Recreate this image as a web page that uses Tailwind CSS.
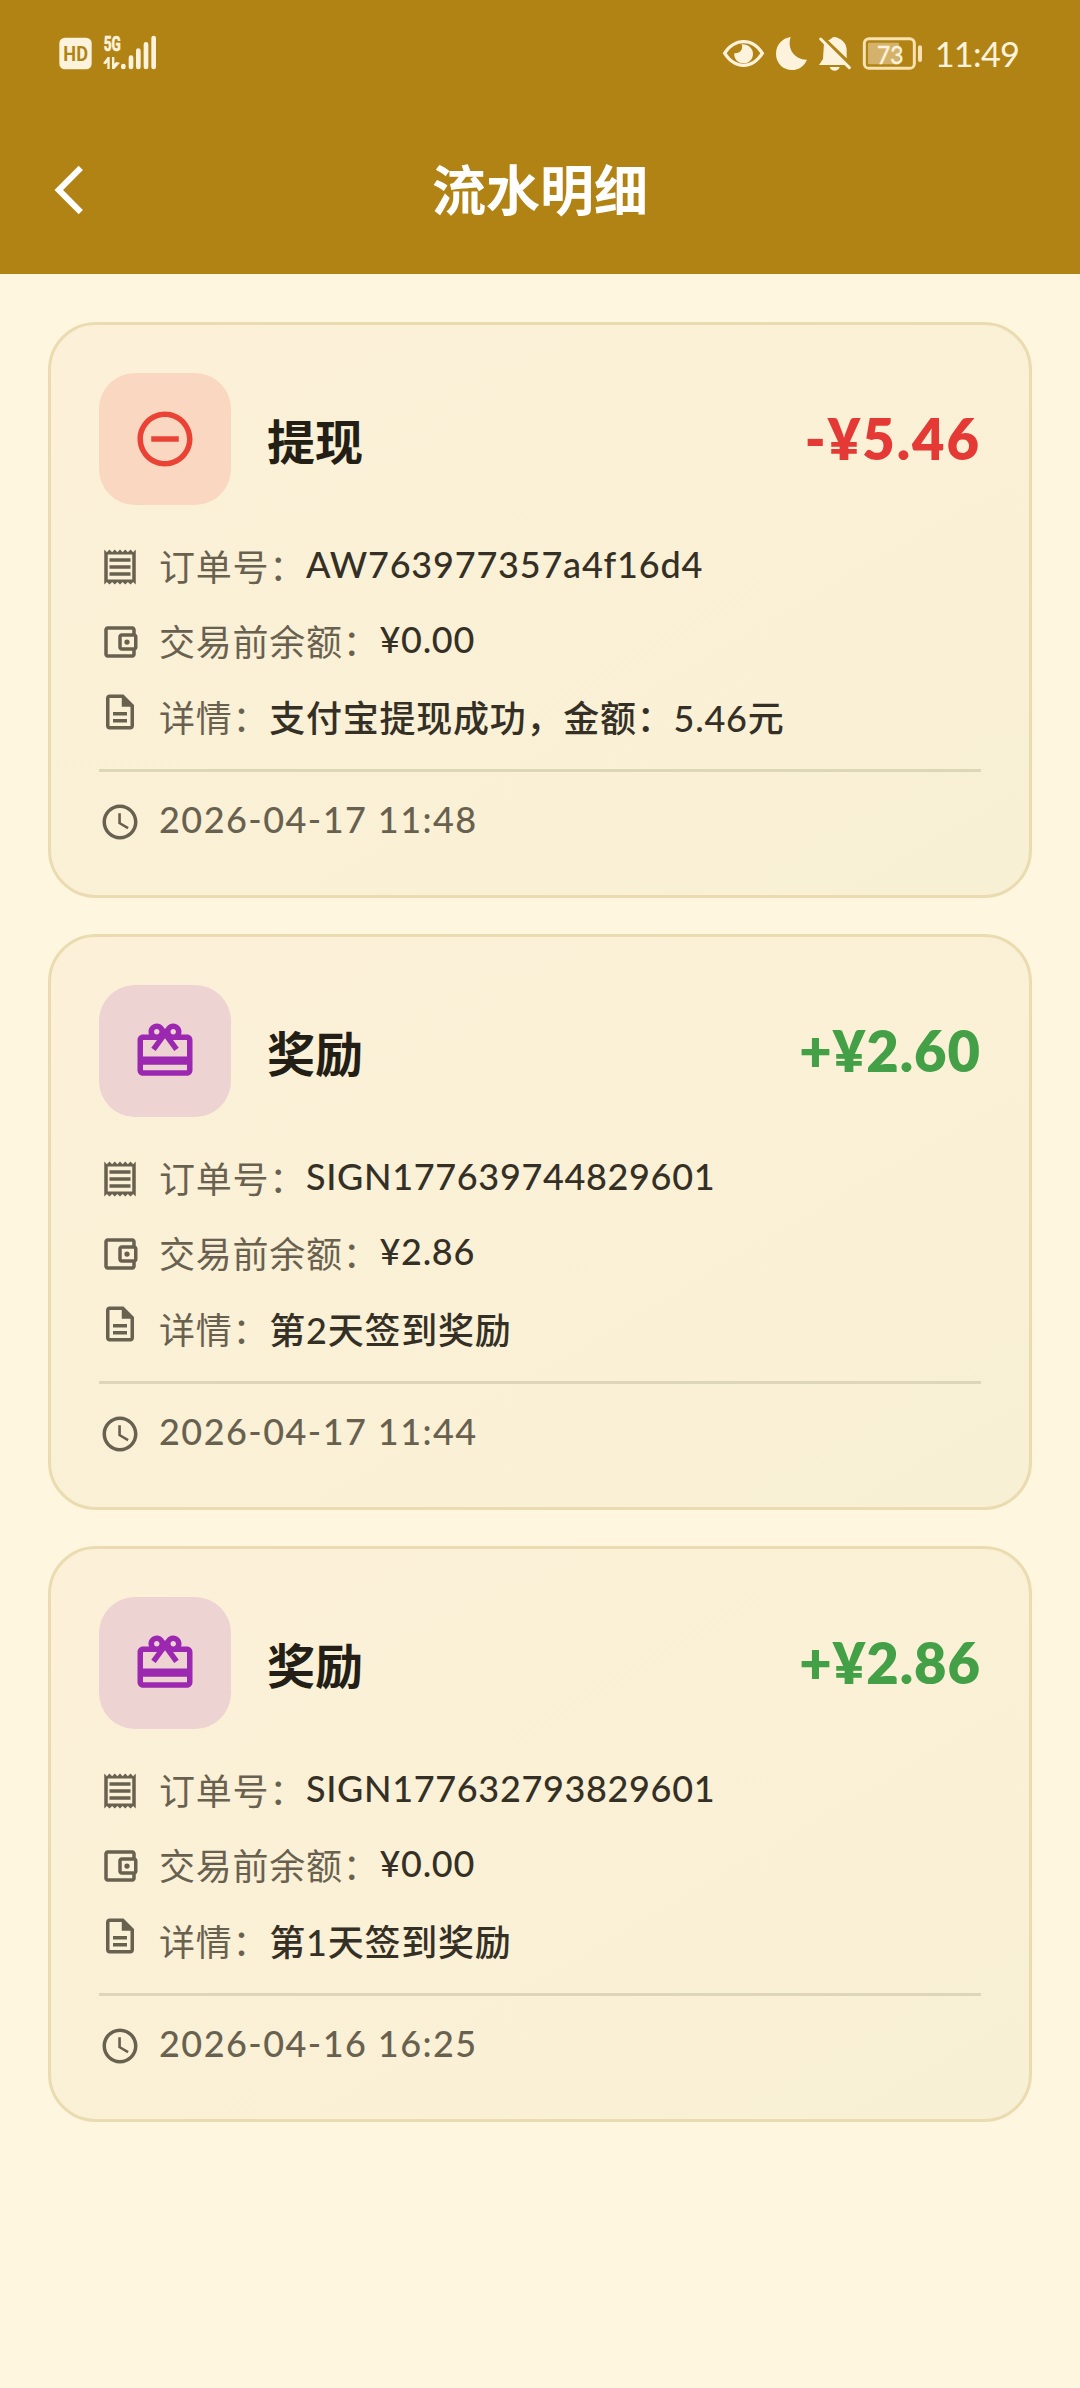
<!DOCTYPE html>
<html lang="zh-CN">
<head>
<meta charset="utf-8">
<title>流水明细</title>
<script src="https://cdn.jsdelivr.net/npm/@tailwindcss/browser@4"></script>
</head>
<body class="bg-[#fef6df] font-['Lato','Noto_Sans_CJK_SC',sans-serif]">
<svg class="hidden">
  <symbol id="minus" viewBox="0 0 24 24"><path d="M7 11v2h10v-2H7zm5-9C6.48 2 2 6.48 2 12s4.48 10 10 10 10-4.48 10-10S17.52 2 12 2zm0 18c-4.41 0-8-3.59-8-8s3.59-8 8-8 8 3.59 8 8-3.59 8-8 8z"/></symbol>
  <symbol id="gift" viewBox="0 0 24 24"><path d="M20 6h-2.18c.11-.31.18-.65.18-1 0-1.66-1.34-3-3-3-1.05 0-1.96.54-2.5 1.35l-.5.67-.5-.68C10.96 2.54 10.05 2 9 2 7.34 2 6 3.34 6 5c0 .35.07.69.18 1H4c-1.11 0-1.99.89-1.99 2L2 19c0 1.11.89 2 2 2h16c1.11 0 2-.89 2-2V8c0-1.11-.89-2-2-2zm-5-2c.55 0 1 .45 1 1s-.45 1-1 1-1-.45-1-1 .45-1 1-1zM9 4c.55 0 1 .45 1 1s-.45 1-1 1-1-.45-1-1 .45-1 1-1zm11 15H4v-2h16v2zm0-5H4V8h5.08L7 10.83 8.62 12 11 8.76l1-1.36 1 1.36L15.38 12 17 10.83 14.92 8H20v6z"/></symbol>
  <symbol id="receipt" viewBox="0 0 24 24"><path d="M19.5 3.5L18 2l-1.5 1.5L15 2l-1.5 1.5L12 2l-1.5 1.5L9 2 7.5 3.5 6 2 4.5 3.5 3 2v20l1.5-1.5L6 22l1.5-1.5L9 22l1.5-1.5L12 22l1.5-1.5L15 22l1.5-1.5L18 22l1.5-1.5L21 22V2l-1.5 1.5zM19 19.09H5V4.91h14v14.18zM6 15h12v2H6zm0-4h12v2H6zm0-4h12v2H6z"/></symbol>
  <symbol id="wallet" viewBox="0 0 24 24"><path d="M21 7.28V5c0-1.1-.9-2-2-2H5c-1.11 0-2 .9-2 2v14c0 1.1.89 2 2 2h14c1.1 0 2-.9 2-2v-2.28c.59-.35 1-.98 1-1.72V9c0-.74-.41-1.37-1-1.72zM20 9v6h-7V9h7zM5 19V5h14v2h-6c-1.1 0-2 .9-2 2v6c0 1.1.9 2 2 2h6v2H5z"/><circle cx="16" cy="12" r="1.5"/></symbol>
  <symbol id="doc" viewBox="0 0 24 24"><path d="M8 16h8v2H8zm0-4h8v2H8zm6-10H6c-1.1 0-2 .9-2 2v16c0 1.1.89 2 1.99 2H18c1.1 0 2-.9 2-2V8l-6-6zm4 18H6V4h7v5h5v11z"/></symbol>
  <symbol id="clock" viewBox="0 0 24 24"><path d="M11.99 2C6.47 2 2 6.48 2 12s4.47 10 9.99 10C17.52 22 22 17.52 22 12S17.52 2 11.99 2zM12 20c-4.42 0-8-3.58-8-8s3.58-8 8-8 8 3.58 8 8-3.58 8-8 8zm.5-13H11v6l5.25 3.15.75-1.23-4.5-2.67z"/></symbol>
</svg>

<header class="h-[274px] bg-[#b18315]">
  <div class="flex h-[106px] items-start justify-between px-10 pt-5">
    <svg class="h-[65px] w-[140px]" viewBox="0 0 420 195" fill="#fdf3dc">
      <rect x="58" y="53" width="97" height="95" rx="17"/>
      <text x="107" y="122" text-anchor="middle" textLength="74" lengthAdjust="spacingAndGlyphs" font-family="Roboto" font-weight="700" font-size="59" fill="#b18315">HD</text>
      <text x="191" y="93" textLength="51" lengthAdjust="spacingAndGlyphs" font-family="Roboto" font-weight="700" font-size="59" stroke="#fdf3dc" stroke-width="2">5G</text>
      <path d="M189 130l14-19h6v36h-7v-20l-5 6zM216 111h7v20l5-5 12 2-17 19h-7z"/>
      <g stroke="#fdf3dc" stroke-width="14" stroke-linecap="round"><path d="M250 138v3M273 113v28M295 92v49M318 73v68M341 54v87"/></g>
    </svg>
    <svg class="h-[70px] w-[340px]" viewBox="0 0 1020 210" fill="#fdf3dc">
      <path fill-rule="evenodd" d="M68 100C84 74 106 60 131 60s46 14 62 40c-16 26-37 41-62 41s-47-15-63-41zm12 0c13 20 31 31 51 31s37-11 50-31c-13-20-30-30-50-30s-38 10-51 30z"/>
      <path d="M125 73c5 14-3 28-22 27-2 16 10 30 27 30s29-13 29-29-15-29-34-28z"/>
      <path d="M272 51c-12 36 13 69 49 68-8 18-24 31-45 31-27 0-48-21-48-49 0-26 19-47 44-50z"/>
      <path d="M372 68l66 67h-81l12-18zM384 61c5-2 9-4 12-8 4-3 12-3 16 0 18 7 28 20 28 37v25zM389 141h30c-4 15-26 15-30 0z"/>
      <path d="M362 57l86 86" stroke="#fdf3dc" stroke-width="9" stroke-linecap="round"/>
      <rect x="493" y="56" width="150" height="89" rx="14" fill="none" stroke="#f8e2b1" stroke-width="9"/>
      <rect x="504" y="68" width="93" height="65" rx="4" fill="#d4b26c"/>
      <rect x="654" y="76" width="12" height="50" rx="6" fill="#f8e2b1"/>
      <text x="531" y="131" textLength="79" lengthAdjust="spacingAndGlyphs" font-family="Lato" font-size="77" stroke="#fdf3dc" stroke-width="1.5">73</text>
      <text x="704" y="142" textLength="256" lengthAdjust="spacing" font-family="Lato" font-size="103">11:49</text>
    </svg>
  </div>
  <div class="grid h-[168px] grid-cols-[1fr_auto_1fr] items-start px-10">
    <svg class="mt-[55px] size-[58px]" viewBox="0 0 24 24" fill="#fff"><path d="M17.77 3.77L16 2 6 12l10 10 1.77-1.77L9.54 12z"/></svg>
    <h1 class="mt-[45px] text-[54px] leading-[80px] font-bold text-white">流水明细</h1>
  </div>
</header>

<main class="flex flex-col gap-9 p-12">
  <section class="h-[576px] rounded-[48px] border-3 border-[#eadcb0] bg-linear-to-br from-[#fcf1d8] to-[#f8f0d5] p-12">
    <div class="flex h-[132px] items-center">
      <div class="flex size-[132px] items-center justify-center rounded-[36px] bg-[#f9d7c0]"><svg class="size-[66px]" fill="#ea4336"><use href="#minus"/></svg></div>
      <h2 class="ml-9 pt-1.5 text-[48px] leading-[72px] font-bold text-[#231f17]">提现</h2>
      <p class="ml-auto text-[56px] leading-[72px] font-extrabold tracking-[2px] text-[#e53935]">-¥5.46</p>
    </div>
    <div class="mt-9 flex flex-col gap-6 text-[36px] leading-[51px] tracking-[0.75px] text-[#696150]">
      <div class="flex h-[51px] items-center"><svg class="mr-[18px] size-[42px]" fill="currentColor"><use href="#receipt"/></svg><span class="pt-0.5">订单号：</span><span class="pb-[4px] font-medium tracking-[0.8px] text-[#353026]">AW763977357a4f16d4</span></div>
      <div class="flex h-[51px] items-center"><svg class="mr-[18px] size-[42px]" fill="currentColor"><use href="#wallet"/></svg><span class="pt-0.5">交易前余额：</span><span class="pb-[4px] font-medium tracking-[0.7px] text-[#353026]">¥0.00</span></div>
      <div class="flex h-[51px] items-start"><svg class="mr-[18px] size-[42px]" fill="currentColor"><use href="#doc"/></svg><span class="pt-0.5">详情：</span><span class="pt-0.5 font-medium text-[#353026]">支付宝提现成功，金额：5.46元</span></div>
    </div>
    <div class="mt-[27px] flex h-[78px] items-center border-t-3 border-[#ddd6b8] pt-6 text-[36px] leading-[51px] tracking-[1.45px] text-[#696150]"><svg class="mr-[18px] size-[42px]" fill="currentColor"><use href="#clock"/></svg><time class="pb-[4px] font-medium">2026-04-17 11:48</time></div>
  </section>

  <section class="h-[576px] rounded-[48px] border-3 border-[#eadcb0] bg-linear-to-br from-[#fcf1d8] to-[#f8f0d5] p-12">
    <div class="flex h-[132px] items-center">
      <div class="flex size-[132px] items-center justify-center rounded-[36px] bg-[#edd3d1]"><svg class="size-[66px]" fill="#9c27b0"><use href="#gift"/></svg></div>
      <h2 class="ml-9 pt-1.5 text-[48px] leading-[72px] font-bold text-[#231f17]">奖励</h2>
      <p class="ml-auto text-[56px] leading-[72px] font-extrabold tracking-[1px] text-[#43a047]">+¥2.60</p>
    </div>
    <div class="mt-9 flex flex-col gap-6 text-[36px] leading-[51px] tracking-[0.75px] text-[#696150]">
      <div class="flex h-[51px] items-center"><svg class="mr-[18px] size-[42px]" fill="currentColor"><use href="#receipt"/></svg><span class="pt-0.5">订单号：</span><span class="pb-[4px] font-medium tracking-[0.65px] text-[#353026]">SIGN177639744829601</span></div>
      <div class="flex h-[51px] items-center"><svg class="mr-[18px] size-[42px]" fill="currentColor"><use href="#wallet"/></svg><span class="pt-0.5">交易前余额：</span><span class="pb-[4px] font-medium tracking-[0.7px] text-[#353026]">¥2.86</span></div>
      <div class="flex h-[51px] items-start"><svg class="mr-[18px] size-[42px]" fill="currentColor"><use href="#doc"/></svg><span class="pt-0.5">详情：</span><span class="pt-0.5 font-medium text-[#353026]">第2天签到奖励</span></div>
    </div>
    <div class="mt-[27px] flex h-[78px] items-center border-t-3 border-[#ddd6b8] pt-6 text-[36px] leading-[51px] tracking-[1.45px] text-[#696150]"><svg class="mr-[18px] size-[42px]" fill="currentColor"><use href="#clock"/></svg><time class="pb-[4px] font-medium">2026-04-17 11:44</time></div>
  </section>

  <section class="h-[576px] rounded-[48px] border-3 border-[#eadcb0] bg-linear-to-br from-[#fcf1d8] to-[#f8f0d5] p-12">
    <div class="flex h-[132px] items-center">
      <div class="flex size-[132px] items-center justify-center rounded-[36px] bg-[#edd3d1]"><svg class="size-[66px]" fill="#9c27b0"><use href="#gift"/></svg></div>
      <h2 class="ml-9 pt-1.5 text-[48px] leading-[72px] font-bold text-[#231f17]">奖励</h2>
      <p class="ml-auto text-[56px] leading-[72px] font-extrabold tracking-[1px] text-[#43a047]">+¥2.86</p>
    </div>
    <div class="mt-9 flex flex-col gap-6 text-[36px] leading-[51px] tracking-[0.75px] text-[#696150]">
      <div class="flex h-[51px] items-center"><svg class="mr-[18px] size-[42px]" fill="currentColor"><use href="#receipt"/></svg><span class="pt-0.5">订单号：</span><span class="pb-[4px] font-medium tracking-[0.65px] text-[#353026]">SIGN177632793829601</span></div>
      <div class="flex h-[51px] items-center"><svg class="mr-[18px] size-[42px]" fill="currentColor"><use href="#wallet"/></svg><span class="pt-0.5">交易前余额：</span><span class="pb-[4px] font-medium tracking-[0.7px] text-[#353026]">¥0.00</span></div>
      <div class="flex h-[51px] items-start"><svg class="mr-[18px] size-[42px]" fill="currentColor"><use href="#doc"/></svg><span class="pt-0.5">详情：</span><span class="pt-0.5 font-medium text-[#353026]">第1天签到奖励</span></div>
    </div>
    <div class="mt-[27px] flex h-[78px] items-center border-t-3 border-[#ddd6b8] pt-6 text-[36px] leading-[51px] tracking-[1.45px] text-[#696150]"><svg class="mr-[18px] size-[42px]" fill="currentColor"><use href="#clock"/></svg><time class="pb-[4px] font-medium">2026-04-16 16:25</time></div>
  </section>
</main>
</body>
</html>
